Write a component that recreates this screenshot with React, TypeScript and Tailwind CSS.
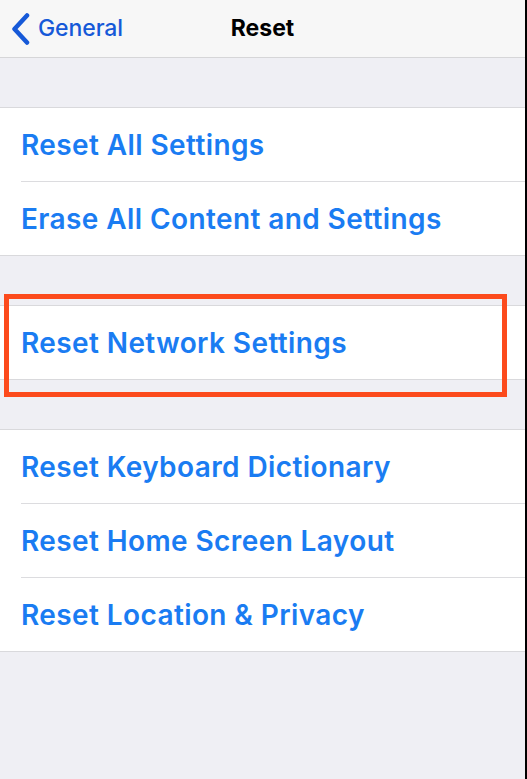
import React from "react";

const groups = [
  ["Reset All Settings", "Erase All Content and Settings"],
  ["Reset Network Settings"],
  ["Reset Keyboard Dictionary", "Reset Home Screen Layout", "Reset Location & Privacy"],
];

const App = () => {
  return (
    <div
      className="relative min-h-[779px] w-[527px] bg-[#efeff4] border-r-2 border-black"
      style={{ fontFamily: "Inter, 'Liberation Sans', sans-serif" }}
    >
      {/* Nav bar */}
      <div className="relative h-[58px] bg-[#f7f7f7] border-b border-[#d6d6d8] flex items-center">
        <div className="flex items-center pl-[11px] text-[#1659d8]">
          <svg width="20" height="32" viewBox="0 0 20 32" className="mr-[7px]">
            <path
              d="M16 2.5 L3.5 16 L16 29.5"
              fill="none"
              stroke="currentColor"
              strokeWidth="4.5"
              strokeLinecap="round"
              strokeLinejoin="round"
            />
          </svg>
          <span className="text-[23px] font-medium tracking-[-0.1px]">General</span>
        </div>
        <div className="absolute left-0 right-0 text-center text-[23px] font-bold text-black pointer-events-none">
          Reset
        </div>
      </div>

      {/* Settings groups */}
      <div className="flex flex-col gap-[49px] pt-[49px]">
        {groups.map((rows, gi) => (
          <div key={gi} className="bg-white border-y border-[#d9d9dc]">
            {rows.map((label, i) => (
              <div key={i} className="pl-[21px]">
                <div
                  className={
                    "flex items-center text-[28px] font-semibold text-[#1a7cf2] tracking-[0.4px] " +
                    (i < rows.length - 1 ? "h-[74px] border-b border-[#dcdcdf]" : "h-[73px]")
                  }
                >
                  {label}
                </div>
              </div>
            ))}
          </div>
        ))}
      </div>

      {/* Highlight annotation */}
      <div className="absolute left-[4px] top-[294px] w-[503px] h-[103px] border-[5px] border-[#fc4a1c]" />
    </div>
  );
};

export default App;
